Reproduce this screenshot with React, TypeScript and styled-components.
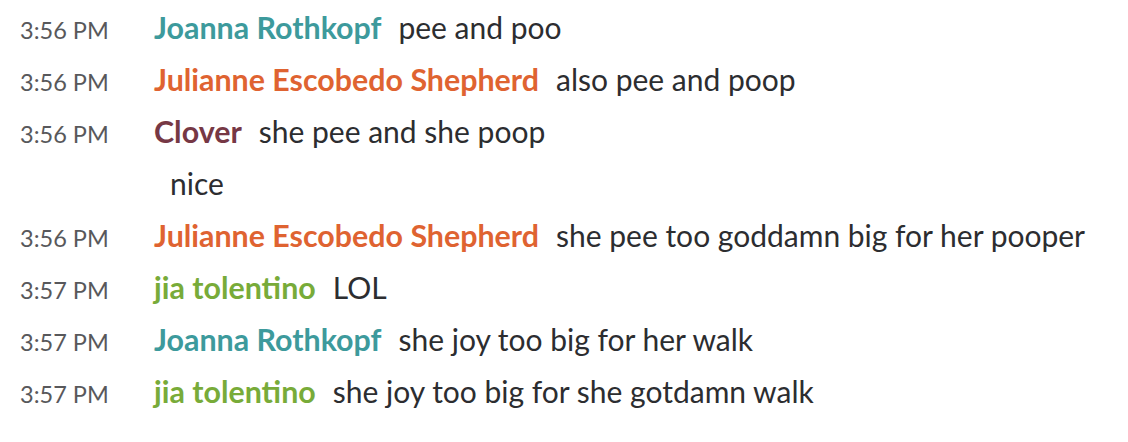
import React from 'react';
import styled, { createGlobalStyle } from 'styled-components';

const GlobalStyle = createGlobalStyle`
  body {
    margin: 0;
    background: #fff;
    font-family: Lato, "Noto Sans", sans-serif;
  }
`;

const Log = styled.div`
  display: flex;
  flex-direction: column;
  padding: 1px 0 0 20px;
`;

const Row = styled.div`
  display: grid;
  grid-template-columns: 134px 1fr;
  align-items: baseline;
  align-content: center;
  height: 52px;
`;

const Time = styled.span`
  font-size: 23.5px;
  color: #58585b;
`;

const Body = styled.div<{ $indent?: boolean }>`
  display: flex;
  align-items: baseline;
  gap: 17px;
  padding-left: ${(p) => (p.$indent ? '16px' : '0')};
  grid-column: 2;
`;

const Name = styled.span<{ $color: string }>`
  font-size: 30.4px;
  font-weight: 700;
  color: ${(p) => p.$color};
`;

const Text = styled.span`
  font-size: 30px;
  color: #2c2d30;
`;

const colors: Record<string, string> = {
  'Joanna Rothkopf': '#3d9a9c',
  'Julianne Escobedo Shepherd': '#df6331',
  Clover: '#763845',
  'jia tolentino': '#78ab39',
};

type Msg = { time?: string; name?: string; text: string };

const messages: Msg[] = [
  { time: '3:56 PM', name: 'Joanna Rothkopf', text: 'pee and poo' },
  { time: '3:56 PM', name: 'Julianne Escobedo Shepherd', text: 'also pee and poop' },
  { time: '3:56 PM', name: 'Clover', text: 'she pee and she poop' },
  { text: 'nice' },
  { time: '3:56 PM', name: 'Julianne Escobedo Shepherd', text: 'she pee too goddamn big for her pooper' },
  { time: '3:57 PM', name: 'jia tolentino', text: 'LOL' },
  { time: '3:57 PM', name: 'Joanna Rothkopf', text: 'she joy too big for her walk' },
  { time: '3:57 PM', name: 'jia tolentino', text: 'she joy too big for she gotdamn walk' },
];

const App = () => (
  <>
    <GlobalStyle />
    <Log>
      {messages.map((m, i) => (
        <Row key={i}>
          {m.time && <Time>{m.time}</Time>}
          <Body $indent={!m.name}>
            {m.name && <Name $color={colors[m.name]}>{m.name}</Name>}
            <Text>{m.text}</Text>
          </Body>
        </Row>
      ))}
    </Log>
  </>
);

export default App;
